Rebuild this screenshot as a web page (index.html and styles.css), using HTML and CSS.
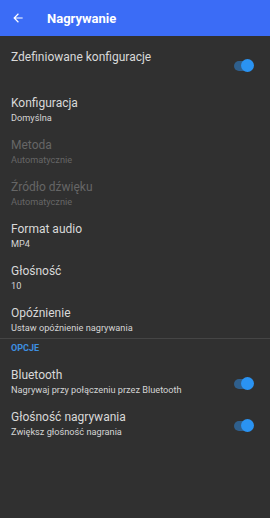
FILE: index.html
```html
<!DOCTYPE html>
<html>
<head>
<meta charset="utf-8">
<link rel="stylesheet" href="styles.css">
</head>
<body>
<header class="appbar">
  <svg class="back" width="14" height="14" viewBox="0 0 24 24"><path d="M20 11H7.83l5.59-5.59L12 4l-8 8 8 8 1.41-1.41L7.83 13H20v-2z" fill="#fff"/></svg>
  <span class="title">Nagrywanie</span>
</header>
<main class="list">
  <div class="row first">
    <div class="texts"><div class="t">Zdefiniowane konfiguracje</div></div>
    <div class="switch"><span class="track"></span><span class="thumb"></span></div>
  </div>
  <div class="row"><div class="texts"><div class="t">Konfiguracja</div><div class="s">Domyślna</div></div></div>
  <div class="row disabled"><div class="texts"><div class="t">Metoda</div><div class="s">Automatycznie</div></div></div>
  <div class="row disabled"><div class="texts"><div class="t">Źródło dźwięku</div><div class="s">Automatycznie</div></div></div>
  <div class="row"><div class="texts"><div class="t">Format audio</div><div class="s">MP4</div></div></div>
  <div class="row"><div class="texts"><div class="t">Głośność</div><div class="s">10</div></div></div>
  <div class="row"><div class="texts"><div class="t">Opóźnienie</div><div class="s">Ustaw opóźnienie nagrywania</div></div></div>
  <div class="divider"></div>
  <div class="category">OPCJE</div>
  <div class="row sw">
    <div class="texts"><div class="t">Bluetooth</div><div class="s">Nagrywaj przy połączeniu przez Bluetooth</div></div>
    <div class="switch"><span class="track"></span><span class="thumb"></span></div>
  </div>
  <div class="row sw">
    <div class="texts"><div class="t">Głośność nagrywania</div><div class="s">Zwiększ głośność nagrania</div></div>
    <div class="switch"><span class="track"></span><span class="thumb"></span></div>
  </div>
</main>
</body>
</html>
```
FILE: styles.css
```css
* { box-sizing: border-box; }
html, body { margin: 0; padding: 0; }
body {
  width: 270px;
  height: 518px;
  background: #303030;
  font-family: Roboto, "Noto Sans", sans-serif;
  overflow: hidden;
}
.appbar {
  height: 36px;
  background: #3b6cf6;
  display: flex;
  align-items: center;
  padding-left: 11px;
}
.back { display: block; }
.title {
  color: #fff;
  font-size: 13px;
  font-weight: 700;
  margin-left: 22px;
}
.list { display: flex; flex-direction: column; }
.row {
  display: flex;
  align-items: flex-start;
  padding: 7px 16px 7px 11px;
  min-height: 42px;
}
.row.first { padding-top: 14px; min-height: 53px; }
.texts { flex: 1; min-width: 0; }
.t {
  color: #d9d9d9;
  font-size: 12px;
  line-height: 15px;
}
.s {
  color: #d4d4d4;
  font-size: 9.2px;
  line-height: 13px;
}
.disabled .t, .disabled .s { color: #666; }
.switch {
  position: relative;
  width: 22px;
  height: 14px;
  margin-top: 9px;
  flex: none;
}
.row.first .switch { margin-top: 9px; }
.track {
  position: absolute;
  left: 2px;
  top: 2px;
  width: 17px;
  height: 10px;
  border-radius: 5px;
  background: #2f5f8c;
}
.thumb {
  position: absolute;
  right: 0;
  top: 0;
  width: 13px;
  height: 13px;
  border-radius: 50%;
  background: #2a93f2;
}
.divider {
  height: 1px;
  background: #454545;
  margin: -3px 0 0 0;
}
.category {
  color: #3d8fe0;
  font-size: 9px;
  font-weight: 700;
  padding: 4px 11px 8px;
  line-height: 10px;
}
```
